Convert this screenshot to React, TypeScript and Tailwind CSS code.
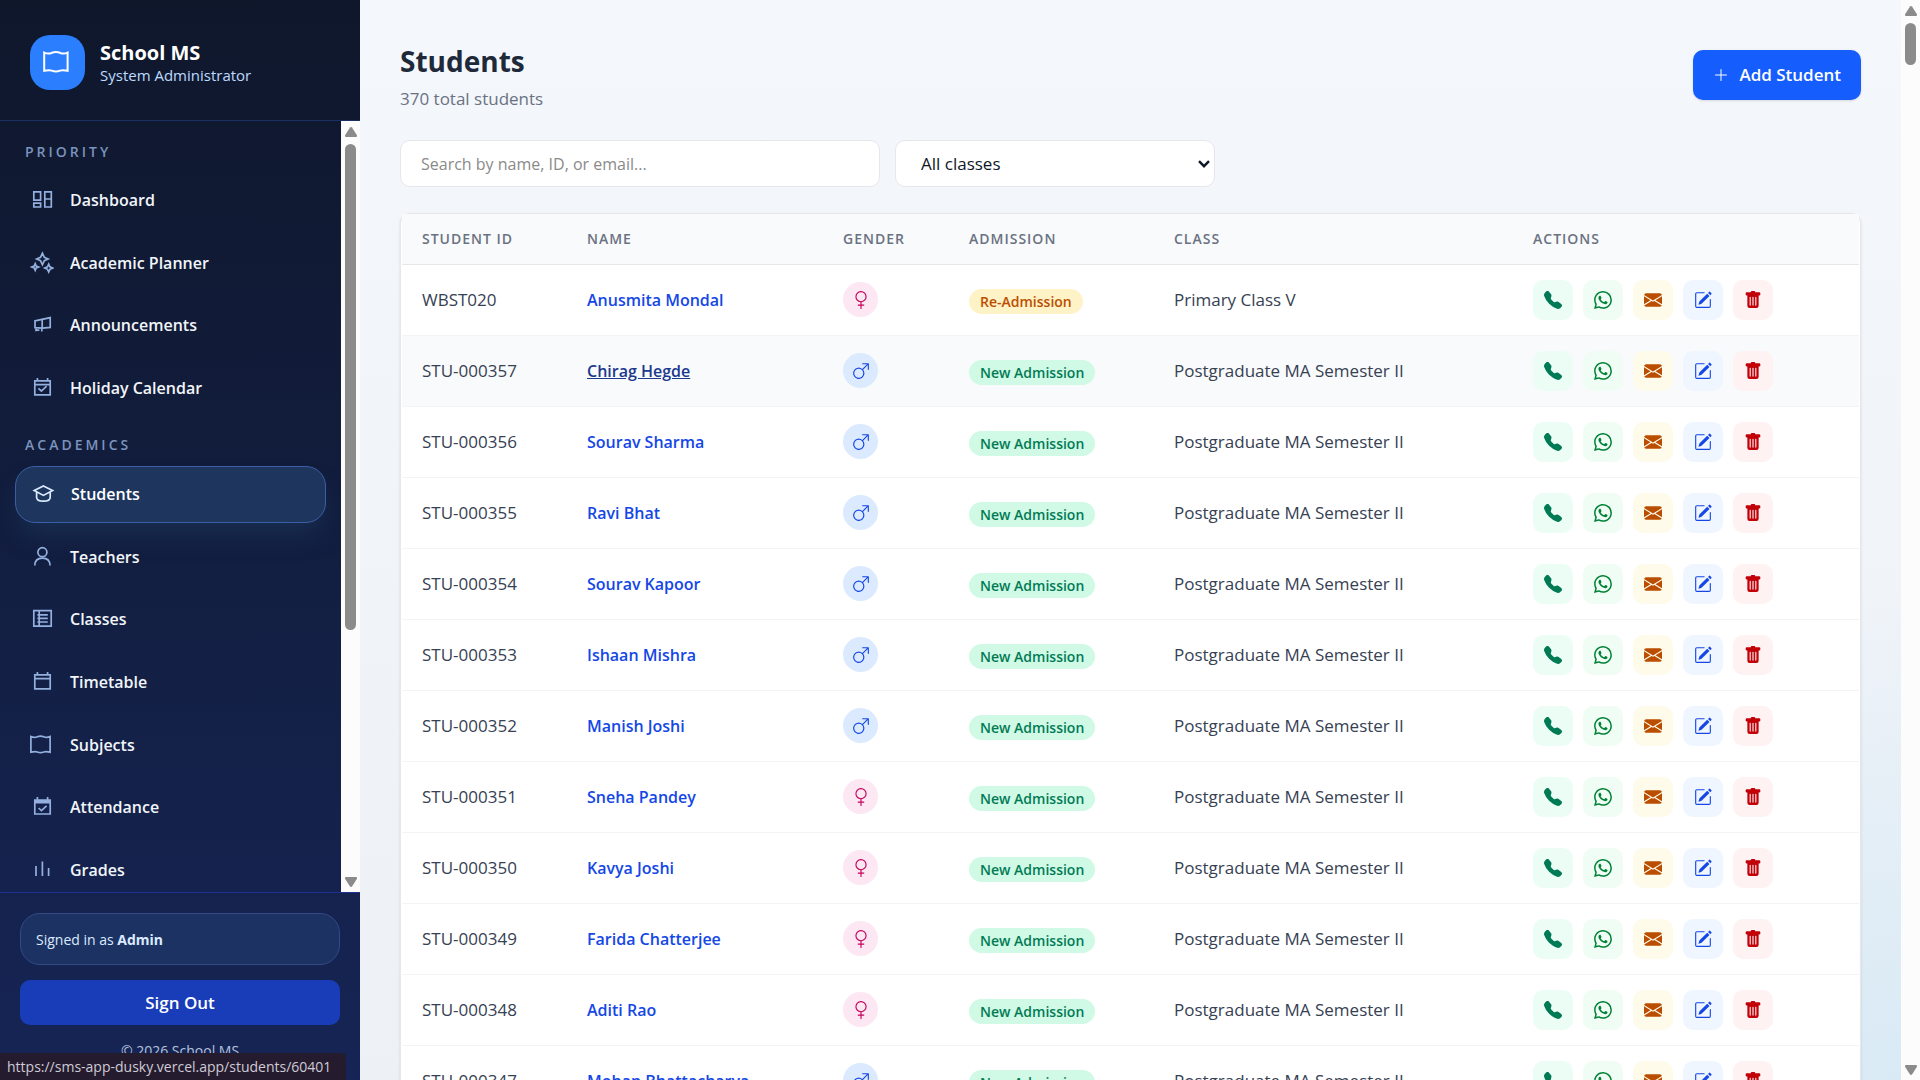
import type { ReactNode } from "react";
import {
  BsEnvelopeFill,
  BsGenderFemale,
  BsGenderMale,
  BsPencilSquare,
  BsPlusLg,
  BsTelephoneFill,
  BsTrashFill,
  BsWhatsapp,
} from "react-icons/bs";

// Sidebar icons, drawn on a 24px grid
const icons: Record<string, ReactNode> = {
  dashboard: (
    <path d="M3.8 3.8h6.8v8.4H3.8zM3.8 15.2h6.8v3.8H3.8zM14.8 3.8h6.5v15.2h-6.5zM14.8 11h6.5" />
  ),
  planner: (
    <path d="M12.4 2.2l1.9 4.1 3.8 1.7-3.8 1.7-1.9 4.1-1.9-4.1L6.7 8l3.8-1.7zM5.2 12.6l1 2.4 2.4 1-2.4 1-1 2.4-1-2.4-2.4-1 2.4-1zM18.7 13.2l1.2 2.7 2.7 1.2-2.7 1.2-1.2 2.7-1.2-2.7-2.7-1.2 2.7-1.2z" />
  ),
  announcements: (
    <path d="M5 7.8l7.2-1.4v8.8L5 14.6zM12.2 6.4l8-1.8v9.8l-8 .8M6 14.6v3.6M6 17.2h3.4M11.8 15v3.4" />
  ),
  holiday: (
    <>
      <path d="M4.8 4.8h15.4v14H4.8zM4.8 8.6h15.4M7.4 2v3M17.6 2v3" />
      <path d="M8.4 12.4l3 2.6 5.2-4.8" />
    </>
  ),
  students: (
    <path d="M12.4 4l9.2 4.6-9.2 4.8-9.2-4.8zM5.6 10.2v5c0 3 3.4 4 6.8 4s6.8-1 6.8-4v-5" />
  ),
  teachers: (
    <>
      <circle cx="12.4" cy="7.2" r="4.5" />
      <path d="M4.8 20.6c0-5.4 3.2-7.4 7.6-7.4s7.6 2 7.6 7.4" />
    </>
  ),
  classes: (
    <path d="M3.8 3.6h17.4v15.6H3.8zM9.2 3.6v15.6M7.4 7.8h10.4M7.4 11.4h10.4M7.4 15h10.4" />
  ),
  timetable: <path d="M4.8 4.8h15.4v14H4.8zM4.8 8.6h15.4M7.4 2v3M17.6 2v3" />,
  subjects: (
    <path d="M.9 3.6v15.6c3.4-.8 5.2-.6 6.4-.2 2 .9 4.4.9 6.4 0 1.2-.4 3-.6 6.4.2V3.6c-2.6 1.2-4.6 1-6.4.2-2-.9-4.4-.9-6.4 0-1.8.8-3.8 1-6.4-.2z" />
  ),
  attendance: (
    <>
      <path d="M4.8 5h15.4v14H4.8zM7.4 2v4M17.6 2v4M4.8 6.2h15.4M4.8 7.6h15.4" />
      <path d="M8.6 13l2.8 2.6 5.2-4.8" />
    </>
  ),
  grades: <path d="M6 8v10M12.4 3.6V18M18.6 10v8" />,
};

function Icon({ name, className }: { name: string; className: string }) {
  return (
    <svg
      viewBox="0 0 24 24"
      fill="none"
      stroke="currentColor"
      strokeWidth="1.7"
      className={className}
      aria-hidden="true"
    >
      {icons[name]}
    </svg>
  );
}

const priority = [
  { name: "Dashboard", icon: "dashboard" },
  { name: "Academic Planner", icon: "planner" },
  { name: "Announcements", icon: "announcements" },
  { name: "Holiday Calendar", icon: "holiday" },
];

const academics = [
  { name: "Students", icon: "students", active: true },
  { name: "Teachers", icon: "teachers" },
  { name: "Classes", icon: "classes" },
  { name: "Timetable", icon: "timetable" },
  { name: "Subjects", icon: "subjects" },
  { name: "Attendance", icon: "attendance" },
  { name: "Grades", icon: "grades" },
];

const MA = "Postgraduate MA Semester II";

const students = [
  { id: "WBST020", name: "Anusmita Mondal", gender: "F", isNew: false, klass: "Primary Class V" },
  { id: "STU-000357", name: "Chirag Hegde", gender: "M", isNew: true, klass: MA, hovered: true },
  { id: "STU-000356", name: "Sourav Sharma", gender: "M", isNew: true, klass: MA },
  { id: "STU-000355", name: "Ravi Bhat", gender: "M", isNew: true, klass: MA },
  { id: "STU-000354", name: "Sourav Kapoor", gender: "M", isNew: true, klass: MA },
  { id: "STU-000353", name: "Ishaan Mishra", gender: "M", isNew: true, klass: MA },
  { id: "STU-000352", name: "Manish Joshi", gender: "M", isNew: true, klass: MA },
  { id: "STU-000351", name: "Sneha Pandey", gender: "F", isNew: true, klass: MA },
  { id: "STU-000350", name: "Kavya Joshi", gender: "F", isNew: true, klass: MA },
  { id: "STU-000349", name: "Farida Chatterjee", gender: "F", isNew: true, klass: MA },
  { id: "STU-000348", name: "Aditi Rao", gender: "F", isNew: true, klass: MA },
  { id: "STU-000347", name: "Mohan Bhattacharya", gender: "M", isNew: true, klass: MA },
];

const actions = [
  { label: "Call", icon: BsTelephoneFill, className: "bg-emerald-50 text-emerald-700" },
  { label: "WhatsApp", icon: BsWhatsapp, className: "bg-green-50 text-green-700" },
  { label: "Email", icon: BsEnvelopeFill, className: "bg-amber-50 text-amber-700" },
  { label: "Edit", icon: BsPencilSquare, className: "bg-blue-50 text-blue-700" },
  { label: "Delete", icon: BsTrashFill, className: "bg-red-50 text-red-700" },
];

function ScrollBar({ thumb }: { thumb: string }) {
  return (
    <div
      className="flex w-[19px] shrink-0 flex-col items-center bg-[#fcfcfc] text-[#8b8b8b]"
      aria-hidden="true"
    >
      <svg viewBox="0 0 12 10" className="mt-1.5 h-2.5 w-3" fill="currentColor">
        <path d="M6 0c.5 0 .8.2 1 .5l4.8 7.5c.5.9.1 2-1 2H1.2c-1.1 0-1.5-1.1-1-2L5 .5c.2-.3.5-.5 1-.5z" />
      </svg>
      <div className={`mt-[7px] w-[11px] rounded-full bg-[#8b8b8b] ${thumb}`} />
      <svg viewBox="0 0 12 10" className="mt-auto mb-[5px] h-2.5 w-3" fill="currentColor">
        <path d="M6 10c.5 0 .8-.2 1-.5L11.8 2c.5-.9.1-2-1-2H1.2C.1 0-.3 1.1.2 2L5 9.5c.2.3.5.5 1 .5z" />
      </svg>
    </div>
  );
}

type NavItem = { name: string; icon: string; active?: boolean };

function NavList({ items, className }: { items: NavItem[]; className: string }) {
  return (
    <ul className={`grid auto-rows-fr items-center ${className}`}>
      {items.map((item) => (
        <li key={item.name}>
          <a
            href="#"
            className={
              item.active
                ? "flex h-[57px] items-center gap-4 rounded-[20px] border border-[#3b5fa5] bg-[#1e365e] px-[15px] text-white shadow-[0_16px_24px_-6px_rgba(30,64,100,0.5)]"
                : "flex h-[55px] items-center gap-4 px-[15px] text-slate-100"
            }
          >
            <Icon
              name={item.icon}
              className={item.active ? "size-6 text-blue-100" : "size-6 text-[#93b0df]"}
            />
            <span className="text-[16px] font-semibold">{item.name}</span>
          </a>
        </li>
      ))}
    </ul>
  );
}

function Sidebar() {
  return (
    <aside className="flex w-[360px] shrink-0 flex-col bg-linear-to-b from-slate-900 to-blue-950">
      <div className="flex h-[121px] shrink-0 items-center gap-[15px] border-b border-[#1c2f63] px-[30px] pt-1">
        <div className="flex size-[55px] items-center justify-center rounded-[20px] bg-[#2b7fff] text-white">
          <svg
            viewBox="0 0 30 22"
            className="h-[22px] w-[30px]"
            fill="none"
            stroke="currentColor"
            strokeWidth="2"
            aria-hidden="true"
          >
            <path d="M1.2 1.6v18.2c4-1 6-.7 7.6-.2 2.6 1 5.6 1 8.2 0 1.6-.5 3.6-.8 7.6.2V1.6c-3 1.4-5.4 1.2-7.6.2-2.6-1-5.6-1-8.2 0-2.2 1-4.6 1.2-7.6-.2z" />
          </svg>
        </div>
        <div className="pt-0.5">
          <div className="text-[20px] leading-6 font-bold text-white">School MS</div>
          <div className="text-[15px] leading-5 text-blue-200">System Administrator</div>
        </div>
      </div>

      <div className="flex min-h-0 flex-1">
        <nav className="min-w-0 flex-1 overflow-hidden px-[15px] pt-[19px]">
          <h2 className="px-[10px] text-[14px] leading-6 font-semibold tracking-[3px] text-[#7b93bd]">
            PRIORITY
          </h2>
          <NavList items={priority} className="mt-[5px] h-[250px]" />
          <h2 className="mt-[14px] px-[10px] text-[14px] leading-6 font-semibold tracking-[3px] text-[#7b93bd]">
            ACADEMICS
          </h2>
          <NavList items={academics} className="mt-[6px] h-[438px]" />
        </nav>
        <ScrollBar thumb="h-[486px]" />
      </div>

      <div className="h-[188px] shrink-0 border-t border-[#1d3192] px-5 pt-5">
        <div className="flex h-[52px] items-center rounded-[20px] border border-[#334a86] bg-[#1c3263] px-[15px] text-[14px] text-blue-100">
          <span>
            Signed in as <strong className="font-bold">Admin</strong>
          </span>
        </div>
        <button className="mt-[15px] h-[45px] w-full rounded-[10px] bg-[#193cb8] text-[17px] font-semibold text-white">
          Sign Out
        </button>
        <p className="mt-4 text-center text-[14px] leading-5 text-[#b4c2dd]">© 2026 School MS</p>
      </div>
    </aside>
  );
}

function StudentTable() {
  const th = "px-5 text-left text-[14px] font-semibold tracking-[1px] text-gray-500";
  return (
    <div className="mt-[26px] rounded-[10px] border border-gray-200 bg-white px-px shadow-sm">
      <table className="w-full table-fixed border-collapse text-[17px] text-gray-700">
        <thead>
          <tr className="h-[50px] border-b border-gray-200 bg-gray-50">
            <th className={`w-[165px] ${th}`}>STUDENT ID</th>
            <th className={`w-[256px] ${th}`}>NAME</th>
            <th className={`w-[126px] ${th}`}>GENDER</th>
            <th className={`w-[205px] ${th}`}>ADMISSION</th>
            <th className={th}>CLASS</th>
            <th className={`w-[346px] ${th}`}>ACTIONS</th>
          </tr>
        </thead>
        <tbody>
          {students.map((s) => (
            <tr key={s.id} className={`h-[71px] border-b border-gray-100 ${s.hovered ? "bg-gray-50" : ""}`}>
              <td className="px-5">{s.id}</td>
              <td className="px-5 text-[16px]">
                <a
                  href="#"
                  className={
                    s.hovered
                      ? "font-semibold text-[#1c398e] underline"
                      : "font-semibold text-[#1447e6]"
                  }
                >
                  {s.name}
                </a>
              </td>
              <td className="px-5">
                {s.gender === "F" ? (
                  <span className="flex size-[35px] items-center justify-center rounded-full bg-pink-100 text-pink-700">
                    <BsGenderFemale size={18} title="Female" />
                  </span>
                ) : (
                  <span className="flex size-[35px] items-center justify-center rounded-full bg-blue-100 text-blue-700">
                    <BsGenderMale size={18} title="Male" />
                  </span>
                )}
              </td>
              <td className="px-5 pt-[3px]">
                <span
                  className={
                    s.isNew
                      ? "inline-flex h-[25px] items-center rounded-full bg-emerald-100 px-[11px] text-[14px] font-semibold text-emerald-700"
                      : "inline-flex h-[25px] items-center rounded-full bg-[#fef3c6] px-[11px] text-[14px] font-semibold text-amber-700"
                  }
                >
                  {s.isNew ? "New Admission" : "Re-Admission"}
                </span>
              </td>
              <td className="px-5">{s.klass}</td>
              <td className="px-5">
                <div className="flex gap-[10px]">
                  {actions.map(({ label, icon: ActionIcon, className }) => (
                    <button
                      key={label}
                      aria-label={label}
                      className={`flex size-10 items-center justify-center rounded-[10px] ${className}`}
                    >
                      <ActionIcon size={18} />
                    </button>
                  ))}
                </div>
              </td>
            </tr>
          ))}
        </tbody>
      </table>
    </div>
  );
}

export default function App() {
  return (
    <div className="flex h-screen overflow-hidden font-['Open_Sans','Noto_Sans',sans-serif]">
      <Sidebar />
      <main className="min-w-0 flex-1 overflow-hidden bg-[radial-gradient(circle_at_100%_100%,#d9eaf5_0,transparent_26%),linear-gradient(#f4f7fc,#edf1f6)] px-10 pt-10">
        <div className="flex items-start justify-between">
          <div>
            <h1 className="text-[28px] leading-[42px] font-bold text-gray-800">Students</h1>
            <p className="mt-[5px] text-[17px] leading-6 text-gray-500">370 total students</p>
          </div>
          <button className="mt-[10px] flex h-[50px] items-center gap-[10px] rounded-[10px] bg-[#155dfc] px-5 text-[17px] font-semibold text-white shadow-sm">
            <BsPlusLg size={16} />
            Add Student
          </button>
        </div>

        <div className="mt-[29px] flex gap-[15px]">
          <input
            type="text"
            aria-label="Search students"
            placeholder="Search by name, ID, or email..."
            className="h-[47px] w-[480px] rounded-[10px] border border-gray-200 bg-white px-5 text-[16px] placeholder:text-[#8a8a8a]"
          />
          <div className="relative w-[320px]">
            <select
              aria-label="Class"
              className="h-[47px] w-full appearance-none rounded-[10px] border border-gray-200 bg-white px-[25px] text-[17px] text-gray-900"
            >
              <option>All classes</option>
            </select>
            <svg
              viewBox="0 0 12 8"
              className="pointer-events-none absolute top-5 right-[5px] h-2 w-3"
              fill="none"
              stroke="#101828"
              strokeWidth="2.4"
              aria-hidden="true"
            >
              <path d="M1 1.2l5 5 5-5" />
            </svg>
          </div>
        </div>

        <StudentTable />
      </main>
      <ScrollBar thumb="h-[42px]" />

      {/* Browser status bubble for the hovered link */}
      <div className="fixed bottom-0 left-0 flex h-[27px] w-[346px] items-center rounded-tr bg-[#241c2e] px-[7px] text-[14px] whitespace-nowrap text-[#cfcad6]">
        https://sms-app-dusky.vercel.app/students/60401
      </div>
    </div>
  );
}
